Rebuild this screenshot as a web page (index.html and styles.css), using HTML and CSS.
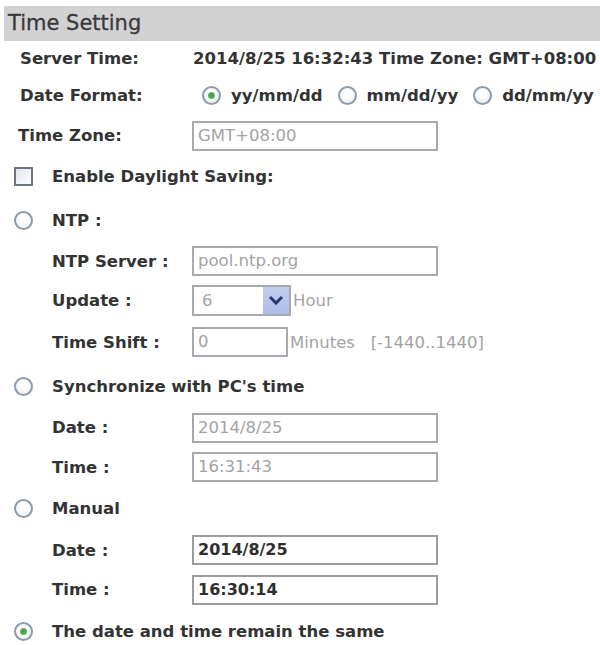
FILE: index.html
```html
<!DOCTYPE html>
<html>
<head>
<meta charset="utf-8">
<link rel="stylesheet" href="styles.css">
</head>
<body>
<div class="page">
  <div class="header">Time Setting</div>

  <div class="row r-server">
    <div class="lbl lbl-top">Server Time:</div>
    <div class="val">2014/8/25 16:32:43 Time Zone: GMT+08:00</div>
  </div>

  <div class="row r-format">
    <div class="lbl lbl-top">Date Format:</div>
    <div class="formats">
      <span class="opt"><span class="radio on"></span>yy/mm/dd</span>
      <span class="opt"><span class="radio"></span>mm/dd/yy</span>
      <span class="opt"><span class="radio"></span>dd/mm/yy</span>
    </div>
  </div>

  <div class="row r-zone">
    <div class="lbl lbl-zone">Time Zone:</div>
    <div class="field wide dim">GMT+08:00</div>
  </div>

  <div class="row r-dst">
    <span class="check"></span>
    <span class="opt-text">Enable Daylight Saving:</span>
  </div>

  <div class="row r-ntp">
    <span class="radio"></span>
    <span class="opt-text">NTP :</span>
  </div>

  <div class="row r-ntpserver">
    <div class="lbl lbl-sub">NTP Server :</div>
    <div class="field wide dim">pool.ntp.org</div>
  </div>

  <div class="row r-update">
    <div class="lbl lbl-sub">Update :</div>
    <div class="select">
      <span class="sel-val">6</span>
      <span class="sel-btn">
        <svg width="16" height="10" viewBox="0 0 16 10"><path d="M2 2 L8 8 L14 2" fill="none" stroke="#28386e" stroke-width="3" stroke-linejoin="miter"/></svg>
      </span>
    </div>
    <span class="unit">Hour</span>
  </div>

  <div class="row r-shift">
    <div class="lbl lbl-sub">Time Shift :</div>
    <div class="field short dim">0</div>
    <span class="unit">Minutes&nbsp;&nbsp;&nbsp;[-1440..1440]</span>
  </div>

  <div class="row r-sync">
    <span class="radio"></span>
    <span class="opt-text">Synchronize with PC's time</span>
  </div>

  <div class="row r-date1">
    <div class="lbl lbl-sub">Date :</div>
    <div class="field wide dim">2014/8/25</div>
  </div>

  <div class="row r-time1">
    <div class="lbl lbl-sub">Time :</div>
    <div class="field wide dim">16:31:43</div>
  </div>

  <div class="row r-manual">
    <span class="radio"></span>
    <span class="opt-text">Manual</span>
  </div>

  <div class="row r-date2">
    <div class="lbl lbl-sub">Date :</div>
    <div class="field wide strong">2014/8/25</div>
  </div>

  <div class="row r-time2">
    <div class="lbl lbl-sub">Time :</div>
    <div class="field wide strong">16:30:14</div>
  </div>

  <div class="row r-same">
    <span class="radio on"></span>
    <span class="opt-text">The date and time remain the same</span>
  </div>
</div>
</body>
</html>
```

FILE: styles.css
```css
html, body {
  margin: 0;
  padding: 0;
  background: #ffffff;
}

.page {
  width: 600px;
  height: 645px;
  overflow: hidden;
  font-family: "DejaVu Sans", Verdana, sans-serif;
  color: #333333;
  padding-top: 6px;
  box-sizing: border-box;
}

.header {
  margin-left: 4px;
  height: 35px;
  background: #d2d2d2;
  color: #3a3a3a;
  font-size: 21px;
  line-height: 35px;
  padding-left: 4px;
  -webkit-text-stroke: 0.3px #3a3a3a;
}

.row {
  display: flex;
  align-items: center;
  font-size: 16.5px;
  font-weight: bold;
  white-space: nowrap;
}

.row > * {
  flex: none;
}

.lbl-top {
  width: 173px;
  padding-left: 20px;
}

.lbl-zone {
  width: 174px;
  padding-left: 18px;
}

.lbl-sub {
  width: 140px;
  padding-left: 52px;
}

.r-server { height: 34px; }
.r-format { height: 41px; }
.r-zone   { height: 39px; }
.r-dst    { height: 43px; padding-left: 14px; }
.r-ntp    { height: 44px; padding-left: 14px; }
.r-ntpserver { height: 38px; }
.r-update { height: 40px; }
.r-shift  { height: 44px; }
.r-sync   { height: 44px; padding-left: 14px; }
.r-date1  { height: 39px; }
.r-time1  { height: 40px; }
.r-manual { height: 43px; padding-left: 14px; }
.r-date2  { height: 40px; }
.r-time2  { height: 39px; }
.r-same   { height: 44px; padding-left: 14px; }

.formats {
  display: flex;
  align-items: center;
  padding-left: 9px;
}

.opt {
  display: flex;
  align-items: center;
  margin-right: 15px;
  flex: none;
}

.opt .radio {
  margin-right: 10px;
}

.radio {
  width: 15px;
  height: 15px;
  border-radius: 50%;
  border: 2px solid #8e9bab;
  background: radial-gradient(circle at 50% 40%, #ffffff 30%, #e2e5ea 100%);
  position: relative;
  flex: none;
}

.radio.on::after {
  content: "";
  position: absolute;
  left: 4px;
  top: 4px;
  width: 7px;
  height: 7px;
  border-radius: 50%;
  background: radial-gradient(circle, #2f9a3a 0%, #7cc07e 100%);
}

.check {
  width: 15px;
  height: 15px;
  border: 2px solid #6d7585;
  background: linear-gradient(135deg, #e2e4ea 0%, #ffffff 100%);
  flex: none;
}

.opt-text {
  margin-left: 19px;
}

.field {
  height: 30px;
  box-sizing: border-box;
  border: 2px solid #a6a9ad;
  font-size: 16.5px;
  line-height: 26px;
  padding-left: 4px;
  overflow: hidden;
}

.wide { width: 246px; }
.short { width: 96px; }

.dim {
  color: #a3a3a3;
  font-weight: normal;
}

.strong {
  color: #2e2e2e;
  font-weight: bold;
  font-size: 16px;
  border-color: #9a9da0;
}

.select {
  width: 99px;
  height: 31px;
  box-sizing: border-box;
  border: 2px solid #a6a9ad;
  display: flex;
  align-items: stretch;
}

.sel-val {
  flex: 1;
  color: #a3a3a3;
  font-weight: normal;
  font-size: 16.5px;
  line-height: 27px;
  padding-left: 8px;
}

.sel-btn {
  width: 26px;
  background: linear-gradient(#c3cdf0, #aebce8);
  display: flex;
  align-items: center;
  justify-content: center;
}

.unit {
  color: #a3a3a3;
  font-weight: normal;
  font-size: 16.5px;
  margin-left: 2px;
  white-space: pre;
}
```
